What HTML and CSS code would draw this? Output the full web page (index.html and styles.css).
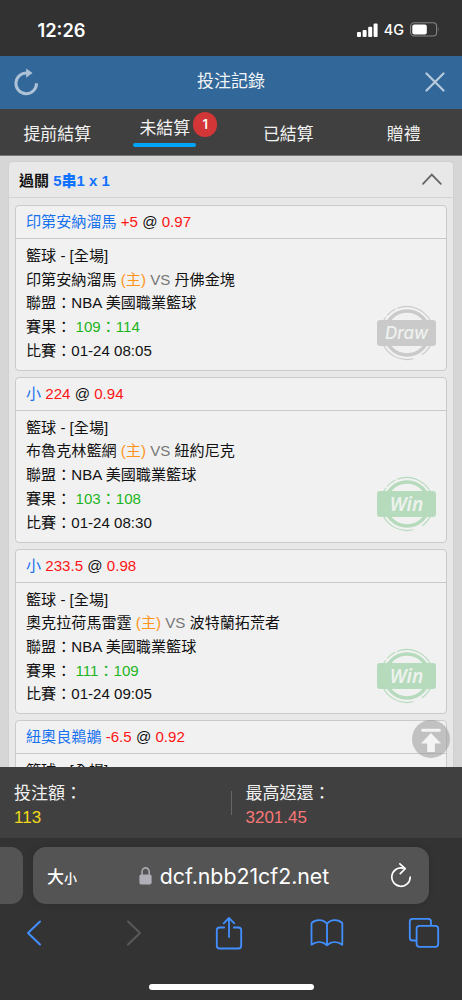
FILE: index.html
```html
<!DOCTYPE html>
<html lang="zh-Hant">
<head>
<meta charset="utf-8">
<title>投注記錄</title>
<link rel="stylesheet" href="styles.css">
</head>
<body>
<svg class="defs" width="0" height="0" aria-hidden="true">
  <symbol id="ring" viewBox="0 0 60 56">
    <circle cx="30" cy="28" r="22" fill="none" stroke="currentColor" stroke-width="3.4"/>
    <g fill="none" stroke="currentColor" stroke-width="1.1">
      <path d="M20.2 3.3A26.5 26.5 0 0 1 54 17"/>
      <path d="M10 10.5A26.5 26.5 0 0 1 18.4 4.1"/>
      <path d="M5.5 18A26.5 26.5 0 0 1 8.8 12"/>
      <path d="M5.5 38A26.5 26.5 0 0 0 36.3 53.8"/>
      <path d="M45 49.8A26.5 26.5 0 0 0 54.5 38"/>
    </g>
  </symbol>
</svg>
<div class="phone">
  <header class="status">
    <time class="clock">12:26</time>
    <div class="signals">
      <svg width="21" height="14" viewBox="0 0 21 14" fill="#fff"><rect x="0" y="9" width="4" height="5" rx="1"/><rect x="5.6" y="7" width="4" height="7" rx="1"/><rect x="11.2" y="3.8" width="4" height="10.2" rx="1"/><rect x="16.6" y="0.5" width="4" height="13.5" rx="1"/></svg>
      <span class="net">4G</span>
      <svg width="30" height="15" viewBox="0 0 30 15"><rect x=".6" y=".8" width="26" height="13.2" rx="3.5" fill="none" stroke="#858585" stroke-width="1.1"/><rect x="2.3" y="2.4" width="14.5" height="10" rx="2" fill="#fff"/><path d="M28.2 5.2Q29.8 7.4 28.2 9.6Z" fill="#858585"/></svg>
    </div>
  </header>
  <div class="title">
    <svg class="refresh" width="26" height="28" viewBox="0 0 26 28"><path d="M23.5 15.3A10.3 10.3 0 1 1 14.5 5.2" fill="none" stroke="#adc2d7" stroke-width="3"/><path d="M13.2.5L19.5 5 13.2 9.8Z" fill="#adc2d7"/></svg>
    <h1>投注記錄</h1>
    <svg width="20" height="20" viewBox="0 0 20 20"><path d="M1.5 1.5L18.5 18.5M18.5 1.5L1.5 18.5" stroke="#b8cadb" stroke-width="2.2" stroke-linecap="round"/></svg>
  </div>
  <nav class="tabs">
    <span class="tab">提前結算</span>
    <span class="tab active"><span class="label">未結算<b class="badge">1</b></span><span class="underline"></span></span>
    <span class="tab">已結算</span>
    <span class="tab">贈禮</span>
  </nav>
  <main class="list">
    <section class="ticket">
      <div class="tickethead"><span>過關 <b>5串1 x 1</b></span>
        <svg width="20" height="12" viewBox="0 0 20 12"><path d="M1 10.8L9.8 1.6 18.8 10.8" fill="none" stroke="#666" stroke-width="1.8" stroke-linecap="round"/></svg>
      </div>
      <div class="bets">
        <article class="bet">
          <h2>印第安納溜馬 <em>+5</em> <i>@</i> <em>0.97</em></h2>
          <div class="detail">
            <p>籃球 - [全場]</p>
            <p>印第安納溜馬 <span class="host">(主)</span> <span class="vs">VS</span> 丹佛金塊</p>
            <p>聯盟：NBA 美國職業籃球</p>
            <p>賽果： <span class="score">109：114</span></p>
            <p>比賽：01-24 08:05</p>
            <div class="stamp draw"><svg width="60" height="56"><use href="#ring"/></svg><span>Draw</span></div>
          </div>
        </article>
        <article class="bet">
          <h2>小 <em>224</em> <i>@</i> <em>0.94</em></h2>
          <div class="detail">
            <p>籃球 - [全場]</p>
            <p>布魯克林籃網 <span class="host">(主)</span> <span class="vs">VS</span> 紐約尼克</p>
            <p>聯盟：NBA 美國職業籃球</p>
            <p>賽果： <span class="score">103：108</span></p>
            <p>比賽：01-24 08:30</p>
            <div class="stamp win"><svg width="60" height="56"><use href="#ring"/></svg><span>Win</span></div>
          </div>
        </article>
        <article class="bet">
          <h2>小 <em>233.5</em> <i>@</i> <em>0.98</em></h2>
          <div class="detail">
            <p>籃球 - [全場]</p>
            <p>奧克拉荷馬雷霆 <span class="host">(主)</span> <span class="vs">VS</span> 波特蘭拓荒者</p>
            <p>聯盟：NBA 美國職業籃球</p>
            <p>賽果： <span class="score">111：109</span></p>
            <p>比賽：01-24 09:05</p>
            <div class="stamp win"><svg width="60" height="56"><use href="#ring"/></svg><span>Win</span></div>
          </div>
        </article>
        <article class="bet">
          <h2>紐奧良鵜鶘 <em>-6.5</em> <i>@</i> <em>0.92</em></h2>
          <div class="detail"><p>籃球 - [全場]</p></div>
        </article>
      </div>
    </section>
    <svg class="totop" width="38" height="38" viewBox="0 0 38 38"><circle cx="19" cy="19" r="19" fill="#999" fill-opacity=".55"/><path d="M10.7 10.3H27.3" stroke="#f4f4f4" stroke-width="3" stroke-linecap="round"/><path d="M19 13L29 23.4H22.8V32H15.2V23.4H9Z" fill="#f4f4f4"/></svg>
  </main>
  <section class="totals">
    <div class="total"><span>投注額：</span><span class="stake">113</span></div>
    <div class="total right"><span>最高返還：</span><span class="payout">3201.45</span></div>
  </section>
  <footer class="browser">
    <div class="address">
      <div class="peek"></div>
      <div class="bar">
        <span class="size">大<small>小</small></span>
        <div class="host-name">
          <svg width="13" height="18" viewBox="0 0 13 18"><path d="M3 8V5A3.6 4.1 0 0 1 10.2 5V8" fill="none" stroke="#aaa9b1" stroke-width="1.6"/><rect x=".4" y="7.4" width="12.2" height="10.2" rx="1.8" fill="#b0afb7"/></svg>
          <span class="url">dcf.nbb21cf2.net</span>
        </div>
        <svg class="reload" width="22" height="26" viewBox="0 0 22 26"><path d="M13 5.1A9.2 9.2 0 1 0 20.2 14.2M9.9.9L15.2 5.7 10.3 10.6" fill="none" stroke="#fff" stroke-width="1.7" stroke-linecap="round" stroke-linejoin="round"/></svg>
      </div>
    </div>
    <div class="tools">
      <span><svg width="16" height="26" viewBox="0 0 16 26"><path d="M14 1.5L2 13 14 24.5" fill="none" stroke="#428fff" stroke-width="2" stroke-linecap="round" stroke-linejoin="round"/></svg></span>
      <span class="forward"><svg width="16" height="26" viewBox="0 0 16 26"><path d="M2 1.5L14 13 2 24.5" fill="none" stroke="#595959" stroke-width="2" stroke-linecap="round" stroke-linejoin="round"/></svg></span>
      <span><svg width="28" height="34" viewBox="0 0 28 34"><path d="M9.2 11.5H4.5Q1.8 11.5 1.8 14.2V29.8Q1.8 32.5 4.5 32.5H23.5Q26.2 32.5 26.2 29.8V14.2Q26.2 11.5 23.5 11.5H18.8M14 21V2.2M8.7 7.3L14 2 19.3 7.3" fill="none" stroke="#428fff" stroke-width="1.8" stroke-linecap="round" stroke-linejoin="round"/></svg></span>
      <span><svg width="34" height="28" viewBox="0 0 34 28"><path d="M17 4.8C13-.1 5.5.2 1.5 4.2V25.7C6.5 22.2 12.5 22.3 17 26.2 21.5 22.3 27.5 22.2 32.3 25.7V4.2C28.5.2 21 -.1 17 4.8V26" fill="none" stroke="#428fff" stroke-width="1.8" stroke-linejoin="round"/></svg></span>
      <span><svg width="32" height="32" viewBox="0 0 32 32"><path d="M8.3 23.5H4.5Q1.8 23.5 1.8 20.8V4.5Q1.8 1.8 4.5 1.8H20.3Q23 1.8 23 4.5V8.6" fill="none" stroke="#428fff" stroke-width="1.8"/><rect x="8.6" y="8.8" width="21.6" height="21" rx="2.8" fill="none" stroke="#428fff" stroke-width="1.8"/></svg></span>
    </div>
    <div class="home"></div>
  </footer>
</div>
</body>
</html>
```
FILE: styles.css
```css
* { box-sizing: border-box; }
body { margin: 0; background: #333; font-family: "Liberation Sans", "Noto Sans CJK TC", sans-serif; }
h1, h2, p { margin: 0; font-weight: 400; }
svg { display: block; flex: none; }
.defs { position: absolute; }
.phone { width: 462px; height: 1000px; display: flex; flex-direction: column; overflow: hidden; }

.status { height: 56px; flex: none; background: #323232; color: #fff; display: flex; justify-content: space-between; align-items: center; padding: 3px 22px 0 37.5px; font-family: Inter, sans-serif; }
.clock { font-size: 18.3px; font-weight: 600; }
.signals { display: flex; align-items: center; gap: 6px; }
.net { font-size: 14.4px; font-weight: 500; }

.title { height: 53px; flex: none; background: #326799; color: #f2f5f8; display: flex; align-items: center; justify-content: space-between; padding: 0 17px 2px 13px; }
.title h1 { font-size: 17px; line-height: 24px; margin-right: 2px; }

.tabs { height: 47px; flex: none; background: #404040; color: #f2f2f2; display: grid; grid-template-columns: repeat(4, 1fr); font-size: 16.9px; border-bottom: 1px solid #777; }
.tab { display: flex; align-items: center; justify-content: center; padding: 1px 1px 0 0; }
.active { flex-direction: column; justify-content: flex-start; padding: 6px 17px 0 0; }
.label { position: relative; line-height: 28px; }
.underline { width: 63px; height: 4px; border-radius: 2px; background: #00a5fb; }
.badge { position: absolute; left: 53.5px; top: -3px; width: 24.5px; height: 24.5px; border-radius: 50%; background: #d23636; color: #fff; font: 600 13px/24px Inter, sans-serif; text-align: center; }

.list { flex: 1; min-height: 0; overflow: hidden; position: relative; background: #d6d6d6; padding: 6px 9px 0; }
.ticket { background: #e8e8e8; border-radius: 4px; box-shadow: 0 0 2px #c5c5c5; }
.tickethead { height: 36px; border-bottom: 1.5px solid #d3d3d3; display: flex; align-items: center; justify-content: space-between; padding: 0 11px 1px 10px; font-size: 15px; font-weight: 700; color: #111; }
.tickethead b { color: #1172ff; }
.bets { display: flex; flex-direction: column; gap: 6px; padding: 7px 6px; }
.bet { height: 165.8px; flex: none; background: #f1f1f1; border: 1px solid #cacaca; border-radius: 4px; font-size: 15.1px; color: #111; }
.bet h2 { height: 33px; border-bottom: 1px solid #cacaca; padding-left: 10px; line-height: 31.5px; font-size: 15.1px; color: #1772ee; white-space: nowrap; }
.bet em { font-style: normal; color: #fd1515; }
.bet i { font-style: normal; color: #111; }
.detail { position: relative; padding: 5px 10px; line-height: 23.7px; }
.detail p { height: 23.7px; white-space: nowrap; }
.host { color: #ff941b; }
.vs { color: #777; }
.score { color: #1db51d; }
.stamp { position: absolute; right: 9.5px; top: 65.5px; display: grid; place-items: center; }
.stamp svg, .stamp span { grid-area: 1 / 1; }
.stamp span { width: 59.5px; height: 26px; border-radius: 3px; background: currentColor; text-align: center; -webkit-text-fill-color: #eef2ee; }
.draw { color: #cacaca; }
.draw span { font: italic 500 17px/26px Inter, sans-serif; }
.win { color: #b5dbbc; }
.win span { font: italic 600 19px/26px "Noto Sans", "Open Sans", sans-serif; }
.totop { position: absolute; right: 12px; bottom: 9px; }

.totals { height: 71px; flex: none; background: #404040; display: flex; align-items: center; font-size: 17px; color: #f2f2f2; }
.total { flex: 1; display: flex; flex-direction: column; padding: 5px 0 0 14px; line-height: 25px; }
.total span { height: 24.5px; }
.right { border-left: 1px solid #666; height: 24px; justify-content: center; }
.stake { color: #f0d91c; }
.payout { color: #f77777; }

.browser { height: 162px; flex: none; background: #333; display: flex; flex-direction: column; padding-top: 9px; }
.address { display: flex; gap: 10px; height: 57px; }
.peek { width: 23px; background: #545454; border-radius: 0 12px 12px 0; }
.bar { width: 396px; background: #545454; border-radius: 13px; display: flex; align-items: center; justify-content: space-between; padding: 0 17px 0 14px; color: #fff; box-shadow: 0 0 5px #2d2d2d; }
.size { font: 500 17px "Noto Sans CJK TC", sans-serif; }
.size small { font-size: 13px; }
.host-name { display: flex; align-items: center; gap: 8px; }
.url { font: 400 21.3px Inter, sans-serif; white-space: nowrap; }
.reload { margin-left: -1px; }
.tools { display: flex; justify-content: space-between; align-items: center; height: 34px; margin-top: 12px; padding: 0 22px 0 18px; }
.tools span { width: 32px; display: flex; justify-content: center; }
.tools .forward { padding-left: 4px; }
.home { width: 165px; height: 6px; border-radius: 3px; background: #fff; margin: 34px auto 0; }
```
